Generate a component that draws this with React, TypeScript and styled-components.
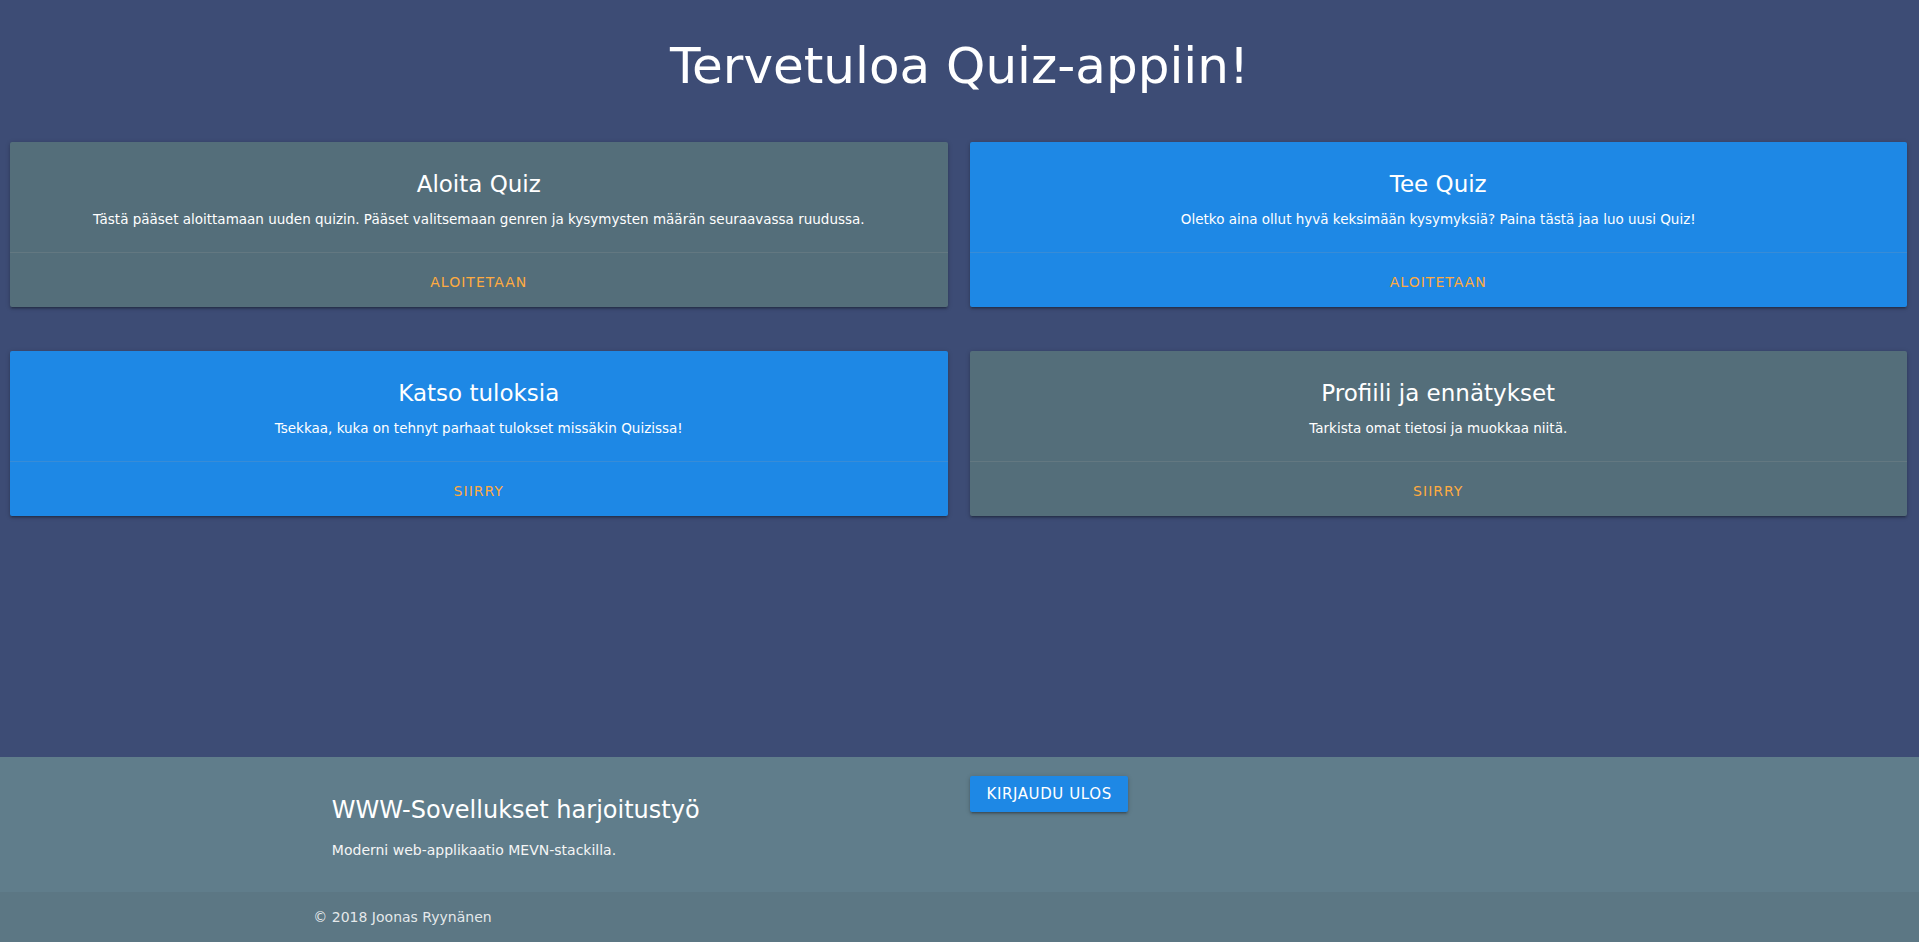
import React from 'react';
import styled, { createGlobalStyle } from 'styled-components';

const GlobalStyle = createGlobalStyle`
  html, body, #root {
    margin: 0;
    padding: 0;
    height: 100%;
  }
  body {
    background-color: #3d4c75;
    font-family: "Comic Sans MS", "DejaVu Sans", sans-serif;
    color: #fff;
    font-size: 15px;
    line-height: 1.5;
  }
`;

const Page = styled.div`
  display: flex;
  flex-direction: column;
  min-height: 100vh;
`;

const Main = styled.main`
  flex: 1;
`;

const Title = styled.h1`
  margin: 0 0 45px;
  padding-top: 35px;
  text-align: center;
  font-size: 50px;
  font-weight: 400;
  line-height: 62px;
  color: #fff;
`;

const CardGrid = styled.div`
  display: grid;
  grid-template-columns: 1fr 1fr;
  column-gap: 22px;
  row-gap: 44px;
  padding: 0 12px 0 10px;
`;

const Card = styled.div<{ tone: 'grey' | 'blue' }>`
  background-color: ${props => props.tone === 'blue' ? '#1e88e5' : '#546e7a'};
  border-radius: 2px;
  box-shadow: 0 2px 2px 0 rgba(0, 0, 0, 0.14), 0 3px 1px -2px rgba(0, 0, 0, 0.12),
    0 1px 5px 0 rgba(0, 0, 0, 0.2);
  text-align: center;
`;

const CardContent = styled.div`
  padding: 26px 24px 22px;
`;

const CardTitle = styled.div`
  font-size: 23px;
  line-height: 32px;
  margin-bottom: 8px;
`;

const CardText = styled.p`
  margin: 0;
  font-size: 13.5px;
  line-height: 22px;
`;

const CardAction = styled.div`
  border-top: 1px solid rgba(160, 160, 160, 0.2);
  padding: 18px 24px 14px;
  line-height: 22px;
`;

const ActionLink = styled.a`
  color: #ffab40;
  text-transform: uppercase;
  font-size: 14px;
  letter-spacing: 1px;
  text-decoration: none;
  cursor: pointer;
`;

const Footer = styled.footer`
  background-color: #607d8b;
`;

const FooterInner = styled.div`
  width: 70%;
  margin: 0 auto;
  display: grid;
  grid-template-columns: 1fr 1fr;
  column-gap: 22px;
  padding: 19px 0 31px;
`;

const FooterInfo = styled.div`
  padding-left: 44px;
`;

const FooterHeading = styled.h5`
  margin: 21px 0 0;
  font-size: 24px;
  font-weight: 400;
  line-height: 27px;
`;

const FooterText = styled.p`
  margin: 15px 0 0;
  font-size: 14px;
  line-height: 22px;
  color: #f5f5f5;
`;

const LogoutButton = styled.button`
  justify-self: start;
  height: 36px;
  padding: 0 16px;
  border: none;
  border-radius: 2px;
  background-color: #1e88e5;
  color: #fff;
  font-family: inherit;
  font-size: 15px;
  letter-spacing: 0.6px;
  text-transform: uppercase;
  cursor: pointer;
  box-shadow: 0 2px 2px 0 rgba(0, 0, 0, 0.14), 0 3px 1px -2px rgba(0, 0, 0, 0.12),
    0 1px 5px 0 rgba(0, 0, 0, 0.2);
`;

const Copyright = styled.div`
  background-color: rgba(51, 51, 51, 0.08);
  height: 50px;
  line-height: 50px;
`;

const CopyrightInner = styled.div`
  width: 70%;
  margin: 0 auto;
  padding-left: 51px;
  font-size: 14px;
  color: rgba(255, 255, 255, 0.85);
`;

interface MenuCard {
  title: string;
  text: string;
  action: string;
  tone: 'grey' | 'blue';
}

const cards: MenuCard[] = [
  {
    title: 'Aloita Quiz',
    text: 'Tästä pääset aloittamaan uuden quizin. Pääset valitsemaan genren ja kysymysten määrän seuraavassa ruudussa.',
    action: 'Aloitetaan',
    tone: 'grey',
  },
  {
    title: 'Tee Quiz',
    text: 'Oletko aina ollut hyvä keksimään kysymyksiä? Paina tästä jaa luo uusi Quiz!',
    action: 'Aloitetaan',
    tone: 'blue',
  },
  {
    title: 'Katso tuloksia',
    text: 'Tsekkaa, kuka on tehnyt parhaat tulokset missäkin Quizissa!',
    action: 'Siirry',
    tone: 'blue',
  },
  {
    title: 'Profiili ja ennätykset',
    text: 'Tarkista omat tietosi ja muokkaa niitä.',
    action: 'Siirry',
    tone: 'grey',
  },
];

const App: React.FC = () => {
  return (
    <>
      <GlobalStyle />
      <Page>
        <Main>
          <Title>Tervetuloa Quiz-appiin!</Title>
          <CardGrid>
            {cards.map(card => (
              <Card key={card.title} tone={card.tone}>
                <CardContent>
                  <CardTitle>{card.title}</CardTitle>
                  <CardText>{card.text}</CardText>
                </CardContent>
                <CardAction>
                  <ActionLink>{card.action}</ActionLink>
                </CardAction>
              </Card>
            ))}
          </CardGrid>
        </Main>

        <Footer>
          <FooterInner>
            <FooterInfo>
              <FooterHeading>WWW-Sovellukset harjoitustyö</FooterHeading>
              <FooterText>Moderni web-applikaatio MEVN-stackilla.</FooterText>
            </FooterInfo>
            <div>
              <LogoutButton>Kirjaudu ulos</LogoutButton>
            </div>
          </FooterInner>
          <Copyright>
            <CopyrightInner>© 2018 Joonas Ryynänen</CopyrightInner>
          </Copyright>
        </Footer>
      </Page>
    </>
  );
};

export default App;
